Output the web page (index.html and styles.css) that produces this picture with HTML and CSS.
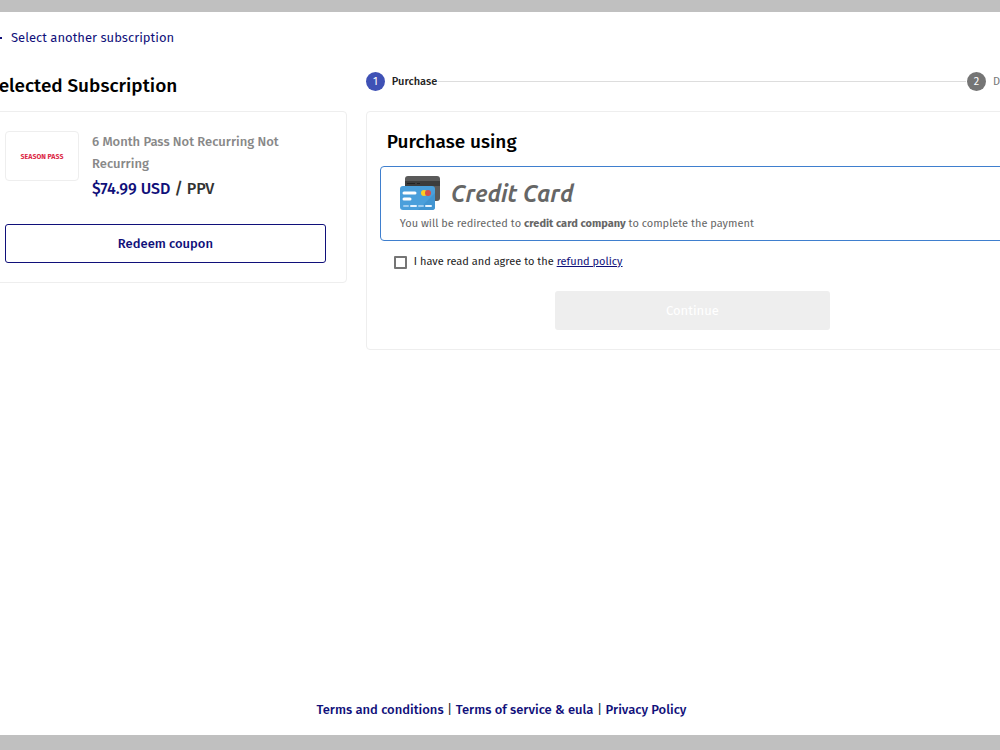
FILE: index.html
```html
<!DOCTYPE html>
<html lang="en">

<head>
    <meta charset="UTF-8">
    <meta name="viewport" content="width=device-width, initial-scale=1.0">
    <title>Purchase</title>
    <link rel="stylesheet" href="styles.css">
</head>

<body>
    <div class="modal">
        <!-- Back link -->
        <a class="back-link" href="#">
            <svg class="back-arrow" viewBox="0 0 12 12" aria-hidden="true">
                <path d="M12 6H1M5 2L1 6l4 4" />
            </svg>
            Select another subscription
        </a>

        <main class="columns">
            <!-- Selected subscription -->
            <section>
                <h1 class="title heading">Selected Subscription</h1>
                <div class="card summary">
                    <div class="product">
                        <div class="product-logo">SEASON PASS</div>
                        <div class="product-info">
                            <p class="product-name">6 Month Pass Not Recurring Not Recurring</p>
                            <p class="product-price"><span class="amount">$74.99 USD</span> / PPV</p>
                        </div>
                    </div>
                    <button type="button" class="button coupon-button">Redeem coupon</button>
                </div>
            </section>

            <!-- Payment -->
            <section>
                <ol class="stepper">
                    <li class="step active"><span class="step-number">1</span>Purchase</li>
                    <li class="step-line" aria-hidden="true"></li>
                    <li class="step"><span class="step-number">2</span>Done</li>
                </ol>
                <div class="card payment">
                    <h2 class="title">Purchase using</h2>
                    <button type="button" class="method">
                        <span class="method-title">
                            <svg class="card-icon" viewBox="0 0 40 35" aria-hidden="true">
                                <rect x="5" y="0" width="35" height="25" rx="3" fill="#5a5a5a" />
                                <rect x="5" y="5" width="35" height="5" fill="#3c3c3c" />
                                <path d="M7 7.500h8M17 7.500h3" stroke="#222" />
                                <rect x="0" y="10" width="35" height="24" rx="3" fill="#4a9fdb" />
                                <path d="M35 17L18 34h14q3 0 3-3z" fill="#4195d2" />
                                <path d="M4 17h11M4 23h6" stroke="#fff" stroke-width="3" stroke-linecap="round" />
                                <path d="M4 30h4M19 30h4" stroke="#9fcdf0" stroke-width="2" stroke-linecap="round" />
                                <path d="M11 30h5M26 30h5" stroke="#e6f4ff" stroke-width="2" stroke-linecap="round" />
                                <circle cx="24" cy="17" r="3" fill="#fc2" />
                                <circle cx="28" cy="17" r="3" fill="#d8504b" />
                            </svg>
                            Credit Card
                        </span>
                        <span class="method-text">You will be redirected to <b>credit card company</b> to complete the payment</span>
                    </button>
                    <div class="agree">
                        <input type="checkbox" id="agree" class="checkbox">
                        <label for="agree">I have read and agree to the <a href="#">refund policy</a></label>
                    </div>
                    <button type="button" class="button continue-button" disabled>Continue</button>
                </div>
            </section>
        </main>

        <footer class="footer">
            <a href="#">Terms and conditions</a> | <a href="#">Terms of service &amp; eula</a> | <a href="#">Privacy Policy</a>
        </footer>
    </div>
</body>

</html>
```
FILE: styles.css
```css
* {
    box-sizing: border-box;
}

body {
    display: flex;
    flex-direction: column;
    min-height: 100vh;
    margin: 0;
    padding: 12px 0 15px;
    overflow-x: hidden;
    background-color: #c0c0c0;
    font-family: "Fira Sans", "Noto Sans", sans-serif;
    font-size: 11px;
    color: #222;
}

h1, h2, p, ol {
    margin: 0;
    padding: 0;
}

a {
    color: #10107a;
}

button {
    font-family: inherit;
    cursor: pointer;
}

/* The panel is a little wider than the window on both sides */
.modal {
    flex: 1;
    display: flex;
    flex-direction: column;
    margin: 0 -19px 0 -16px;
    padding-top: 16px;
    background-color: #fff;
}

.back-link {
    display: flex;
    align-items: center;
    gap: 9px;
    padding-left: 6px;
    font-size: 13px;
    line-height: 20px;
    text-decoration: none;
}

.back-arrow {
    width: 12px;
    height: 12px;
    fill: none;
    stroke: #10107a;
    stroke-width: 2;
}

.columns {
    flex: 1;
    display: grid;
    grid-template-columns: 5fr 9fr;
    gap: 19px;
    padding-top: 24px;
}

.heading {
    margin-bottom: 11px;
    padding-left: 4px;
}

.title {
    font-size: 19px;
    font-weight: 500;
    line-height: 28px;
    color: #000;
}

.card {
    border: 1px solid #eee;
    border-radius: 4px;
}

.summary {
    padding: 19px 20px;
}

.product {
    display: flex;
    gap: 13px;
    margin-bottom: 22px;
}

.product-logo {
    display: flex;
    flex-shrink: 0;
    align-items: center;
    justify-content: center;
    width: 74px;
    height: 50px;
    border: 1px solid #eee;
    border-radius: 4px;
    font-size: 7px;
    font-weight: 700;
    color: #dc2a48;
}

.product-name {
    font-size: 13px;
    font-weight: 500;
    line-height: 22px;
    color: #888;
}

.product-price {
    font-size: 16px;
    font-weight: 500;
    line-height: 27px;
    color: #333;
}

.amount {
    color: #10107a;
}

.button {
    display: block;
    height: 39px;
    border-radius: 3px;
    font-size: 13px;
}

.coupon-button {
    width: 100%;
    border: 1px solid #10107a;
    background-color: #fff;
    font-weight: 500;
    color: #10107a;
}

.stepper {
    display: flex;
    align-items: center;
    gap: 1px;
    height: 19px;
    margin-bottom: 20px;
    list-style: none;
}

.step {
    display: flex;
    align-items: center;
    gap: 7px;
    color: #777;
}

.step.active {
    font-weight: 500;
    color: #222;
}

.step-number {
    width: 19px;
    height: 19px;
    border-radius: 50%;
    background-color: #757575;
    font-weight: 400;
    line-height: 19px;
    text-align: center;
    color: #fff;
}

.active .step-number {
    background-color: #3f51b5;
}

.step-line {
    flex: 1;
    height: 1px;
    background-color: #ddd;
}

.payment {
    padding: 16px 13px 19px;
}

.payment .title {
    margin-bottom: 10px;
    padding-left: 7px;
}

.method {
    display: block;
    width: 100%;
    padding: 9px 19px 7px;
    border: 1px solid #3f7fce;
    border-radius: 4px;
    background-color: #fff;
    text-align: left;
    color: #666;
}

.method-title {
    display: flex;
    align-items: center;
    gap: 11px;
    margin-bottom: 4px;
    font-family: Ubuntu, "Fira Sans", "Noto Sans", sans-serif;
    font-size: 23px;
    font-style: italic;
    font-weight: 700;
    line-height: 35px;
}

.card-icon {
    width: 40px;
    height: 35px;
}

.method-text {
    display: block;
    font-size: 11px;
    line-height: 18px;
}

.agree {
    display: flex;
    align-items: center;
    gap: 7px;
    margin: 12px 0 20px 14px;
    line-height: 18px;
}

.checkbox {
    width: 13px;
    height: 13px;
    margin: 0;
    appearance: none;
    border: 2px solid #757575;
    border-radius: 1px;
}

.checkbox:checked {
    background-color: #3f51b5;
}

.continue-button {
    width: 44%;
    margin: 0 auto;
    border: none;
    background-color: #eee;
    color: #fff;
}

.footer {
    padding-bottom: 15px;
    font-size: 13px;
    line-height: 20px;
    text-align: center;
}

.footer a {
    font-weight: 500;
    text-decoration: none;
}
```
